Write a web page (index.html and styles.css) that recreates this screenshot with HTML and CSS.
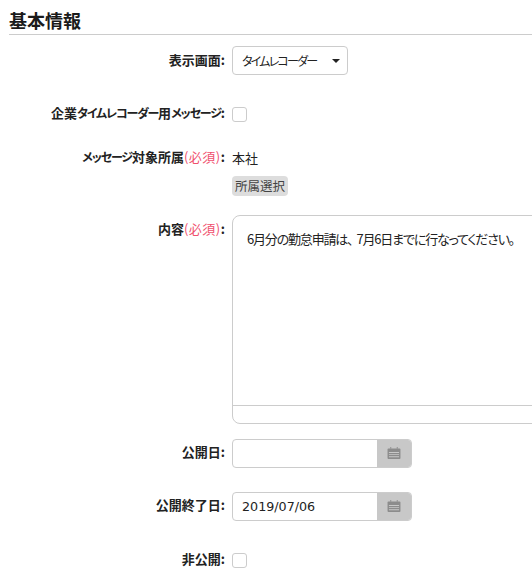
FILE: index.html
```html
<!DOCTYPE html>
<html lang="ja">
<head>
<meta charset="utf-8">
<title>基本情報</title>
<link rel="stylesheet" href="styles.css">
</head>
<body>
<h2 class="title">基本情報</h2>
<form class="form">
  <div class="row row-select">
    <label class="label">表示画面:</label>
    <div class="select"><span class="kana select-text">タイムレコーダー</span><i class="caret"></i></div>
  </div>
  <div class="row row-check1">
    <label class="label">企業<span class="kana">タイムレコーダー</span>用<span class="kana">メッセージ</span>:</label>
    <span class="check"></span>
  </div>
  <div class="row row-dept">
    <label class="label"><span class="kana">メッセージ</span>対象所属<em class="req">(必須)</em>:</label>
    <div class="stack">
      <span class="value">本社</span>
      <button type="button" class="btn">所属選択</button>
    </div>
  </div>
  <div class="row row-editor">
    <label class="label">内容<em class="req">(必須)</em>:</label>
    <div class="editor">
      <div class="editor-body">6月分の勤怠申請は<span class="comma">、</span>7月6日までに行なってください。</div>
      <div class="editor-foot"></div>
    </div>
  </div>
  <div class="row row-date">
    <label class="label">公開日:</label>
    <div class="date">
      <span class="date-input"></span>
      <span class="addon"><svg class="cal" viewBox="0 0 14 13"><path d="M3 0h1v2H3zM10 0h1v2h-1z"/><path fill-rule="evenodd" d="M1 1.5h12a1 1 0 0 1 1 1V12a1 1 0 0 1-1 1H1a1 1 0 0 1-1-1V2.500a1 1 0 0 1 1-1zM1.500 5.500v1h11v-1zM1.500 7.800v1h11v-1zM1.500 10v1h11v-1z"/></svg></span>
    </div>
  </div>
  <div class="row row-date2">
    <label class="label">公開終了日:</label>
    <div class="date">
      <span class="date-input">2019/07/06</span>
      <span class="addon"><svg class="cal" viewBox="0 0 14 13"><path d="M3 0h1v2H3zM10 0h1v2h-1z"/><path fill-rule="evenodd" d="M1 1.5h12a1 1 0 0 1 1 1V12a1 1 0 0 1-1 1H1a1 1 0 0 1-1-1V2.500a1 1 0 0 1 1-1zM1.500 5.500v1h11v-1zM1.500 7.800v1h11v-1zM1.500 10v1h11v-1z"/></svg></span>
    </div>
  </div>
  <div class="row row-check2">
    <label class="label">非公開:</label>
    <span class="check"></span>
  </div>
</form>
</body>
</html>
```
FILE: styles.css
```css
html, body { margin: 0; padding: 0; overflow: hidden; }
body {
  width: 532px;
  height: 576px;
  background: #fff;
  color: #222;
  font-family: "Noto Sans CJK JP", "Noto Sans", sans-serif;
  font-size: 13px;
  line-height: 18px;
}
.title {
  margin: 0 0 0 9px;
  padding-top: 7px;
  height: 27px;
  border-bottom: 1px solid #ccc;
  font-size: 18px;
  font-weight: 700;
  line-height: 26px;
  color: #1a1a1a;
}
.form { display: flex; flex-direction: column; }
.row { display: flex; align-items: flex-start; gap: 7px; }
.label {
  width: 225px;
  flex: none;
  text-align: right;
  font-weight: 700;
  font-size: 13px;
  white-space: nowrap;
}
.kana { font-size: 12px; letter-spacing: -1.150px; font-feature-settings: "palt"; white-space: nowrap; }
.select-text { letter-spacing: -1.800px; }
.req { font-style: normal; font-weight: 400; color: #f0506e; letter-spacing: 0.500px; }
.row-select { margin-top: 11px; }
.row-select .label { padding-top: 5px; }
.row-check1 { margin-top: 31px; }
.row-check1 .label { height: 16px; margin-top: -2px; }
.row-dept { margin-top: 27px; }
.row-dept .label { height: 16px; margin-top: -1px; }
.row-editor { margin-top: 19px; }
.row-editor .label { padding-top: 5px; }
.row-date { margin-top: 15px; }
.row-date .label, .row-date2 .label { padding-top: 4px; }
.row-date2 { margin-top: 24px; }
.row-check2 { margin-top: 31px; }
.row-check2 .label { height: 16px; margin-top: -2px; }
.select {
  box-sizing: border-box;
  width: 116px;
  height: 29px;
  border: 1px solid #ccc;
  border-radius: 4px;
  display: flex;
  align-items: center;
  justify-content: space-between;
  padding: 0 7px 0 9px;
}
.caret {
  width: 0;
  height: 0;
  border-left: 4px solid transparent;
  border-right: 4px solid transparent;
  border-top: 4.500px solid #222;
}
.check {
  box-sizing: border-box;
  width: 15px;
  height: 15px;
  margin-top: 1px;
  border: 1px solid #ccc;
  border-radius: 3px;
  background: #fff;
}
.stack { display: flex; flex-direction: column; align-items: flex-start; gap: 9px; }
.value { height: 18px; }
.btn {
  box-sizing: border-box;
  width: 56px;
  height: 20px;
  padding: 0;
  border: 0;
  border-radius: 4px;
  background: #ddd;
  color: #444;
  font-family: inherit;
  font-size: 12.500px;
  line-height: 20px;
}
.editor {
  box-sizing: border-box;
  width: 320px;
  height: 209px;
  flex: none;
  border: 1px solid #ccc;
  border-radius: 8px 0 0 8px;
  display: flex;
  flex-direction: column;
}
.editor-body { flex: 1; padding: 14px 14px; white-space: nowrap; letter-spacing: -1.180px; font-feature-settings: "palt"; }
.comma { margin-right: 4px; }
.editor-foot { height: 17px; border-top: 1px solid #ccc; }
.date {
  box-sizing: border-box;
  width: 180px;
  height: 29px;
  border: 1px solid #ccc;
  border-radius: 4px;
  display: flex;
  overflow: hidden;
}
.date-input {
  flex: 1;
  padding-left: 9px;
  line-height: 27px;
  font-family: "DejaVu Sans", sans-serif;
  font-size: 12.700px;
}
.addon {
  width: 34px;
  background: #c8c8c8;
  display: flex;
  align-items: center;
  justify-content: center;
}
.cal { width: 14px; height: 12px; margin-bottom: 2px; fill: #8c8c8c; }
```
